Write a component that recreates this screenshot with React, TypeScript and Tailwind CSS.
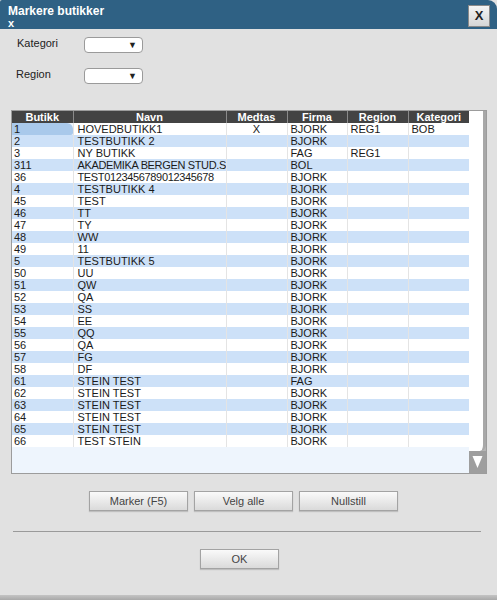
import React from 'react';

const rows: [string, string, string, string, string, string][] = [
    ['1', 'HOVEDBUTIKK1', 'X', 'BJORK', 'REG1', 'BOB'],
    ['2', 'TESTBUTIKK 2', '', 'BJORK', '', ''],
    ['3', 'NY BUTIKK', '', 'FAG', 'REG1', ''],
    ['311', 'AKADEMIKA BERGEN STUD.S', '', 'BOL', '', ''],
    ['36', 'TEST0123456789012345678', '', 'BJORK', '', ''],
    ['4', 'TESTBUTIKK 4', '', 'BJORK', '', ''],
    ['45', 'TEST', '', 'BJORK', '', ''],
    ['46', 'TT', '', 'BJORK', '', ''],
    ['47', 'TY', '', 'BJORK', '', ''],
    ['48', 'WW', '', 'BJORK', '', ''],
    ['49', '11', '', 'BJORK', '', ''],
    ['5', 'TESTBUTIKK 5', '', 'BJORK', '', ''],
    ['50', 'UU', '', 'BJORK', '', ''],
    ['51', 'QW', '', 'BJORK', '', ''],
    ['52', 'QA', '', 'BJORK', '', ''],
    ['53', 'SS', '', 'BJORK', '', ''],
    ['54', 'EE', '', 'BJORK', '', ''],
    ['55', 'QQ', '', 'BJORK', '', ''],
    ['56', 'QA', '', 'BJORK', '', ''],
    ['57', 'FG', '', 'BJORK', '', ''],
    ['58', 'DF', '', 'BJORK', '', ''],
    ['61', 'STEIN TEST', '', 'FAG', '', ''],
    ['62', 'STEIN TEST', '', 'BJORK', '', ''],
    ['63', 'STEIN TEST', '', 'BJORK', '', ''],
    ['64', 'STEIN TEST', '', 'BJORK', '', ''],
    ['65', 'STEIN TEST', '', 'BJORK', '', ''],
    ['66', 'TEST STEIN', '', 'BJORK', '', ''],
];

const headers = ['Butikk', 'Navn', 'Medtas', 'Firma', 'Region', 'Kategori'];

function Select() {
    return (
        <div className="w-[59px] h-[16px] bg-white border border-[#9a9a9a] rounded-[4px] flex items-center justify-end pr-[5px]">
            <span className="text-[9px] leading-none text-[#222]">▼</span>
        </div>
    );
}

function Button({ label, w }: { label: string; w: string }) {
    return (
        <button className={`${w} h-[20px] border border-[#a3a3a3] bg-gradient-to-b from-[#fafafa] to-[#dadada] text-[11px] text-[#444] shadow-[0_1px_1px_rgba(0,0,0,0.15)]`}>
            {label}
        </button>
    );
}

export default function App() {
    return (
        <div className="w-[497px] h-[600px] bg-[#e1e1e1] relative overflow-hidden flex flex-col" style={{ fontFamily: '"Liberation Sans", Arial, sans-serif' }}>
            {/* Title bar */}
            <div className="h-[29px] bg-[#2f6184] rounded-tr-[9px] rounded-tl-[2px] px-[8px] pt-[4px] text-white font-bold relative">
                <div className="text-[12px] leading-[14px]">Markere butikker</div>
                <div className="text-[11px] leading-[10px]">x</div>
                <div className="absolute right-[7px] top-[5px] w-[22px] h-[22px] bg-gradient-to-b from-[#f4f4f4] to-[#d6d6d6] border border-[#8a8a8a] flex items-center justify-center text-[#222] text-[13px] font-bold">
                    X
                </div>
            </div>

            {/* Filters */}
            <div className="flex flex-col gap-[15px] mt-[8px]">
                <div className="flex items-center">
                    <span className="w-[84px] pl-[17px] text-[11px] text-[#222] -mt-[3px]">Kategori</span>
                    <Select />
                </div>
                <div className="flex items-center">
                    <span className="w-[84px] pl-[16px] text-[11px] text-[#222] -mt-[3px]">Region</span>
                    <Select />
                </div>
            </div>

            {/* Grid */}
            <div className="ml-[11px] mt-[26px] w-[476px] h-[364px] border border-[#9c9c9c] bg-[#eef5fd] flex">
                <div className="w-[457px]">
                    <table className="table-fixed border-collapse w-[457px] text-[11px] leading-[12px] text-[#1a1a1a]">
                        <colgroup>
                            <col className="w-[61px]" />
                            <col className="w-[153px]" />
                            <col className="w-[61px]" />
                            <col className="w-[60px]" />
                            <col className="w-[61px]" />
                            <col className="w-[61px]" />
                        </colgroup>
                        <thead>
                            <tr className="h-[12px] bg-[#434343] text-white">
                                {headers.map((h) => (
                                    <th key={h} className="font-bold text-center p-0 h-[12px] border-r border-[#8a8a8a] last:border-r-0">{h}</th>
                                ))}
                            </tr>
                        </thead>
                        <tbody>
                            {rows.map((r, i) => (
                                <tr key={i} className={`h-[12px] ${i % 2 === 1 ? 'bg-[#cde1f8]' : 'bg-white'}`}>
                                    {r.map((c, j) => (
                                        <td
                                            key={j}
                                            className={`p-0 h-[12px] whitespace-nowrap overflow-hidden border-r border-[#e4e4e4] ${
                                                j === 0 ? 'pl-[2px]' : j === 2 ? 'text-center' : j === 1 ? 'pl-[4px]' : 'pl-[3px]'
                                            } ${i === 0 && j === 0 ? 'bg-[#a9c9eb] rounded-tr-[6px] rounded-br-[2px]' : ''} ${
                                                j === 1 && c.length > 20 ? 'tracking-[-0.35px]' : ''
                                            }`}
                                        >
                                            {c}
                                        </td>
                                    ))}
                                </tr>
                            ))}
                        </tbody>
                    </table>
                </div>
                {/* Scrollbar */}
                <div className="w-[17px] flex flex-col bg-[#b5b5b5]">
                    <div className="flex-1 bg-white border-r-[3px] border-[#a8a8a8] rounded-br-[6px]" />
                    <div className="h-[22px] bg-[#9e9e9e] flex items-center justify-center">
                        <svg width="11" height="14" viewBox="0 0 11 14">
                            <path d="M0.5 1 L10.5 1 L5.5 13 Z" fill="#ffffff" />
                        </svg>
                    </div>
                </div>
            </div>

            {/* Action buttons */}
            <div className="flex gap-[6px] ml-[89px] mt-[17px]">
                <Button label="Marker (F5)" w="w-[99px]" />
                <Button label="Velg alle" w="w-[99px]" />
                <Button label="Nullstill" w="w-[99px]" />
            </div>

            <div className="ml-[13px] w-[468px] h-px bg-[#9a9a9a] mt-[20px]" />

            <div className="flex ml-[200px] mt-[17px]">
                <Button label="OK" w="w-[79px]" />
            </div>

            <div className="absolute bottom-0 left-0 right-0 h-[5px] bg-gradient-to-b from-[#c4c4c4] to-[#a8a8a8]" />
        </div>
    );
}
